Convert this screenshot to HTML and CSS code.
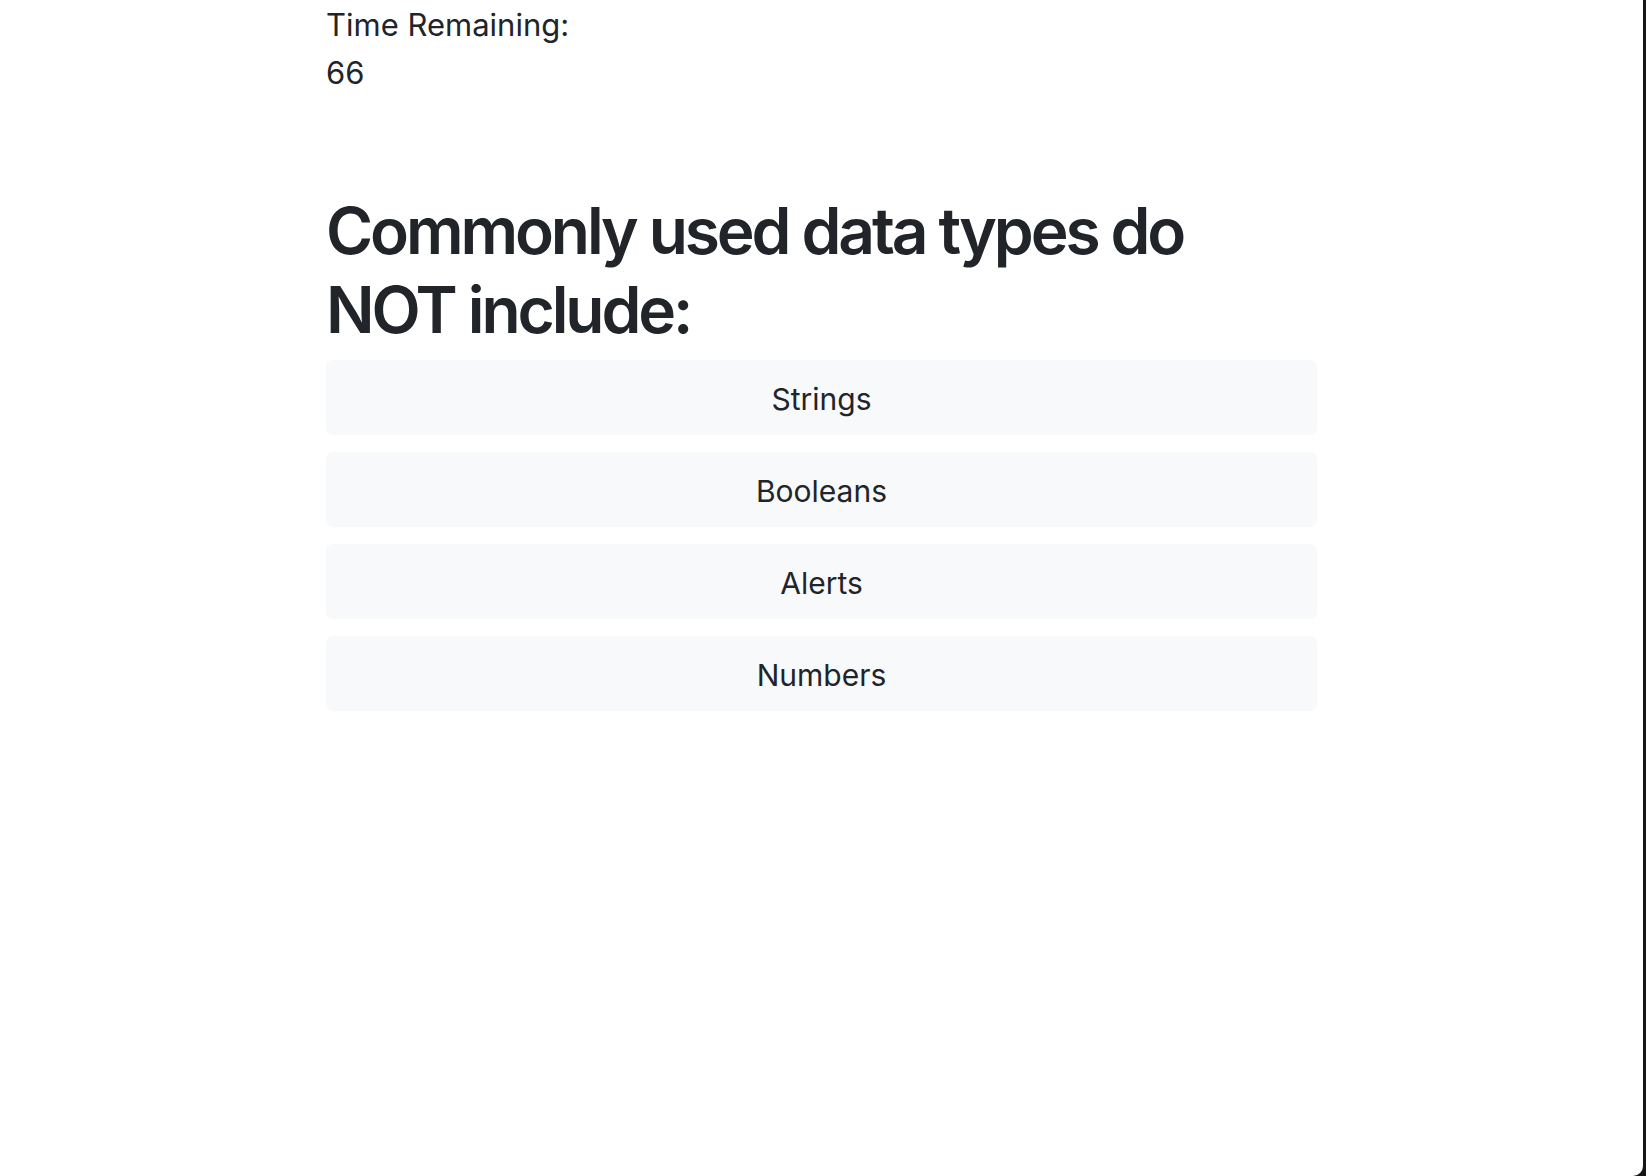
FILE: index.html
```html
<!DOCTYPE html>
<html lang="en">
<head>
<meta charset="utf-8">
<title>Quiz</title>
<link rel="stylesheet" href="styles.css">
</head>
<body>
<div class="page">
  <main class="quiz">
    <div class="timer">
      <p class="timer-label">Time Remaining:</p>
      <p class="timer-value">66</p>
    </div>
    <h1 class="question">Commonly used data types do NOT include:</h1>
    <div class="answers">
      <button class="answer">Strings</button>
      <button class="answer">Booleans</button>
      <button class="answer">Alerts</button>
      <button class="answer">Numbers</button>
    </div>
  </main>
</div>
</body>
</html>
```

FILE: styles.css
```css
html, body {
  margin: 0;
  padding: 0;
  height: 100%;
}
html {
  background: #161616;
}
body {
  font-family: Inter, "Noto Sans", "Liberation Sans", sans-serif;
  color: #212529;
}
.page {
  background: #ffffff;
  width: calc(100% - 3px);
  height: 100%;
  border-bottom-right-radius: 10px;
  overflow: hidden;
}
.quiz {
  width: 991px;
  margin: 0 auto;
}
.timer p {
  margin: 0;
  font-size: 31px;
  line-height: 48px;
}
.timer-label {
  padding-top: 1px;
}
.question {
  margin: 94px 0 11px;
  font-size: 64px;
  font-weight: 600;
  line-height: 79px;
  letter-spacing: -3.1px;
  width: 920px;
}
.answers {
  display: flex;
  flex-direction: column;
  gap: 17px;
}
.answer {
  display: block;
  height: 75px;
  width: 100%;
  border: 0;
  border-radius: 7px;
  background: #f8f9fa;
  color: #212529;
  font-family: inherit;
  font-size: 30px;
  text-align: center;
  padding: 3px 0 0;
}
```
